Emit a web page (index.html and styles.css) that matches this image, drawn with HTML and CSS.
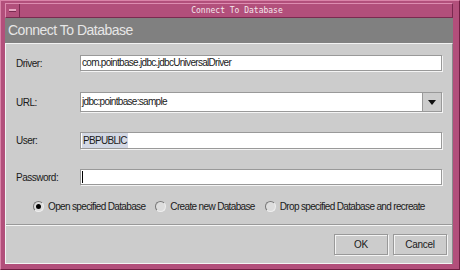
FILE: index.html
```html
<!DOCTYPE html>
<html lang="en">
<head>
  <meta charset="UTF-8">
  <title>Connect To Database</title>
  <link rel="stylesheet" href="styles.css">
</head>
<body>
  <div class="window">
    <div class="titlebar">
      <div class="menu-button"><span class="dash"></span></div>
      <div class="title">Connect To Database</div>
    </div>
    <div class="header">Connect To Database</div>
    <div class="content">
      <div class="form">
        <div class="row row-driver">
          <label class="label">Driver:</label>
          <div class="field">com.pointbase.jdbc.jdbcUniversalDriver</div>
        </div>
        <div class="row row-url">
          <label class="label">URL:</label>
          <div class="combo">
            <div class="combo-text">jdbc:pointbase:sample</div>
            <div class="combo-button"><span class="arrow"></span></div>
          </div>
        </div>
        <div class="row row-user">
          <label class="label">User:</label>
          <div class="field"><span class="selected">PBPUBLIC</span></div>
        </div>
        <div class="row row-password">
          <label class="label">Password:</label>
          <div class="field"><span class="caret"></span></div>
        </div>
        <div class="radios">
          <div class="radio-item"><span class="radio checked"></span>Open specified Database</div>
          <div class="radio-item"><span class="radio"></span>Create new Database</div>
          <div class="radio-item"><span class="radio"></span>Drop specified Database and recreate</div>
        </div>
      </div>
      <div class="buttons">
        <button class="button">OK</button>
        <button class="button">Cancel</button>
      </div>
    </div>
  </div>
</body>
</html>
```

FILE: styles.css
```css
body {
  margin: 0;
  background-color: #b24f7b;
  font-family: "Liberation Sans", Arial, sans-serif;
}

.window {
  width: 460px;
  height: 270px;
  box-sizing: border-box;
  padding: 2px 6px 5px 4px;
  background-color: #b24f7b;
  border-top: 1px solid #d983a8;
  border-left: 1px solid #d983a8;
  border-right: 1px solid #6e1e42;
  border-bottom: 1px solid #6e1e42;
  display: flex;
  flex-direction: column;
}

.titlebar {
  height: 13px;
  flex: none;
  display: flex;
  background-color: #b24f7b;
  border-top: 1px solid #dd8cb0;
  border-left: 1px solid #dd8cb0;
  border-bottom: 1px solid #7a2a50;
  border-right: 1px solid #7a2a50;
}

.menu-button {
  width: 13px;
  border-right: 1px solid #7a2a50;
  display: flex;
  align-items: center;
  justify-content: center;
}

.dash {
  width: 7px;
  height: 2px;
  background-color: #e7a6c2;
  border-bottom: 1px solid #7a2a50;
}

.title {
  flex: 1;
  text-align: center;
  font-family: "DejaVu Sans Mono", monospace;
  font-size: 8px;
  line-height: 13px;
  color: #f4e6ec;
  padding-left: 2px;
}

.header {
  height: 25px;
  flex: none;
  background-color: #808080;
  color: #e6e6e6;
  font-size: 14px;
  letter-spacing: -0.5px;
  line-height: 25px;
  padding-left: 3px;
}

.content {
  flex: 1;
  background-color: #cccccc;
  border-top: 1px solid #f2f2f2;
  border-left: 1px solid #f2f2f2;
  border-right: 1px solid #8a8a8a;
  display: flex;
  flex-direction: column;
  font-size: 10px;
  letter-spacing: -0.5px;
  color: #1a1a1a;
}

.form {
  height: 181px;
  flex: none;
  box-sizing: border-box;
  padding: 11px 10px 0 10px;
  border-bottom: 1px solid #999999;
}

.row {
  display: flex;
  align-items: center;
}

.label {
  width: 64px;
  flex: none;
}

.field {
  flex: 1;
  height: 16px;
  box-sizing: border-box;
  background-color: #ffffff;
  border: 1px solid #999999;
  box-shadow: 1px 1px 0 #f4f4f4;
  padding-left: 1px;
  line-height: 14px;
  white-space: nowrap;
  letter-spacing: -0.7px;
}

.row-url {
  margin-top: 21px;
}

.combo {
  flex: 1;
  height: 20px;
  box-sizing: border-box;
  display: flex;
  background-color: #ffffff;
  border: 1px solid #999999;
  box-shadow: 1px 1px 0 #f4f4f4;
}

.combo-text {
  flex: 1;
  line-height: 18px;
  padding-left: 1px;
  letter-spacing: -0.7px;
}

.combo-button {
  width: 18px;
  background-color: #cccccc;
  border-left: 1px solid #999999;
  display: flex;
  align-items: center;
  justify-content: center;
}

.arrow {
  width: 0;
  height: 0;
  border-left: 4px solid transparent;
  border-right: 4px solid transparent;
  border-top: 5px solid #111111;
}

.row-user {
  margin-top: 20px;
}

.row-user .field {
  height: 17px;
  padding-left: 1px;
}

.selected {
  background-color: #d3d8e4;
  display: inline-block;
  line-height: 15px;
  padding: 0 1px;
}

.row-password {
  margin-top: 20px;
}

.caret {
  display: inline-block;
  width: 1px;
  height: 12px;
  margin-top: 1px;
  background-color: #000000;
  vertical-align: top;
}

.radios {
  display: flex;
  align-items: center;
  margin-top: 16px;
  padding-left: 17px;
  gap: 10px;
  white-space: nowrap;
  letter-spacing: -0.65px;
}

.radio-item {
  display: flex;
  align-items: center;
  gap: 4px;
}

.radio {
  width: 11px;
  height: 11px;
  flex: none;
  box-sizing: border-box;
  border-radius: 50%;
  border: 1px solid;
  border-color: #777777 #eeeeee #eeeeee #777777;
  background-color: #dddddd;
  display: flex;
  align-items: center;
  justify-content: center;
}

.radio.checked::after {
  content: "";
  width: 5px;
  height: 5px;
  border-radius: 50%;
  background-color: #000000;
}

.buttons {
  flex: 1;
  border-top: 1px solid #f4f4f4;
  border-bottom: 1px solid #f4f4f4;
  display: flex;
  justify-content: flex-end;
  align-items: center;
  gap: 5px;
  padding-right: 5px;
}

.button {
  width: 54px;
  height: 21px;
  background-color: #cccccc;
  border: 1px solid #999999;
  box-shadow: inset 1px 1px 0 #f4f4f4, 1px 1px 0 #f4f4f4;
  font-family: "Liberation Sans", Arial, sans-serif;
  font-size: 10px;
  letter-spacing: -0.3px;
  color: #1a1a1a;
  padding: 0;
}
```
